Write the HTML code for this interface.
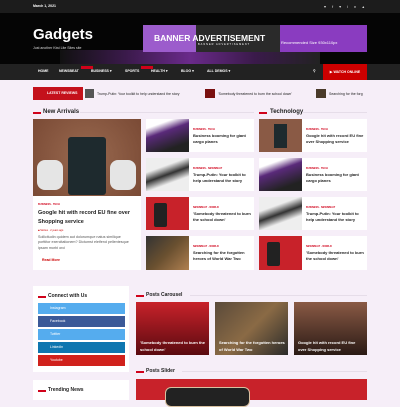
<!DOCTYPE html>
<html><head><meta charset="utf-8"><style>
*{margin:0;padding:0;box-sizing:border-box}
body{width:400px;height:400px;overflow:hidden;background:#f6eef8;font-family:"Liberation Sans",sans-serif;position:relative}
.a{position:absolute}
.t{font-size:4px;color:#222;font-weight:bold;line-height:6px}
.cat{font-size:2.5px;color:#d0021b;font-weight:bold}
.card{background:#fff}
.h{font-size:6px;font-weight:bold;color:#222}
.bar{width:8px;height:1.5px;background:#d0021b}
.line{height:1px;background:#e6dde9}
.nav span{position:absolute;top:5px;font-size:3.5px;color:#fff;font-weight:bold}
.soc{position:absolute;left:38px;width:87px;height:11px;color:#fff;font-size:3.5px;line-height:11px;padding-left:12px}
</style></head><body>
<div class="a" style="left:0;top:0;width:400px;height:13px;background:#1c1c1c"></div>
<div class="a" style="left:33px;top:4px;font-size:3.5px;color:#fff;font-weight:bold">March 1, 2021</div>
<div class="a" style="left:324px;top:4px;font-size:4px;color:#ddd;letter-spacing:6px">▾f▾in▴</div>
<div class="a" style="left:0;top:13px;width:400px;height:51px;background:#050505"></div>
<div class="a" style="left:60px;top:50px;width:260px;height:14px;background:linear-gradient(90deg,#111,#3a1a4a,#6a2a8a,#3a1a4a,#222)"></div>
<div class="a" style="left:33px;top:26px;font-size:15px;color:#fff;font-weight:bold">Gadgets</div>
<div class="a" style="left:33px;top:46px;font-size:3.5px;color:#ddd">Just another Kiwi Lite Sites site</div>
<div class="a" style="left:143px;top:25px;width:53px;height:27px;background:#9c5ccc"></div>
<div class="a" style="left:196px;top:25px;width:84px;height:27px;background:#2a2a2a"></div>
<div class="a" style="left:280px;top:25px;width:87px;height:27px;background:#8a3cc0"></div>
<div class="a" style="left:154px;top:33px;font-size:8.5px;color:#fff;font-weight:bold;white-space:nowrap">BANNER ADVERTISEMENT</div>
<div class="a" style="left:198px;top:43px;font-size:2.5px;color:#fff;letter-spacing:1px">BANNER ADVERTISEMENT</div>
<div class="a" style="left:281px;top:40px;font-size:4px;color:#fff">Recommended Size 930x110px</div>
<div class="a nav" style="left:0;top:64px;width:400px;height:16px;background:#222">
<span style="left:38px">HOME</span><span style="left:59px">NEWSBEAT</span><span style="left:91px">BUSINESS ▾</span><span style="left:125px">SPORTS</span><span style="left:151px">HEALTH ▾</span><span style="left:181px">BLOG ▾</span><span style="left:207px">ALL DEMOS ▾</span><span style="left:313px">⚲</span>
</div>
<div class="a" style="left:81px;top:66px;width:12px;height:3px;background:#d0021b"></div>
<div class="a" style="left:141px;top:66px;width:12px;height:3px;background:#d0021b"></div>
<div class="a" style="left:323px;top:64px;width:44px;height:16px;background:#c00;color:#fff;font-size:3.5px;font-weight:bold;line-height:16px;text-align:center">▶ WATCH ONLINE</div>
<div class="a" style="left:33px;top:87px;width:50px;height:13px;background:#c4111b;color:#fff;font-size:3.5px;font-weight:bold;line-height:13px;padding-left:14px">LATEST REVIEWS</div>
<div class="a" style="left:85px;top:89px;width:9px;height:9px;background:#555"></div>
<div class="a" style="left:97px;top:92px;font-size:3.5px;color:#222">Trump-Putin: Your toolkit to help understand the story</div>
<div class="a" style="left:205px;top:89px;width:10px;height:9px;background:#7a1010"></div>
<div class="a" style="left:218px;top:92px;font-size:3.5px;color:#222">'Somebody threatened to burn the school down'</div>
<div class="a" style="left:316px;top:89px;width:10px;height:9px;background:#4a3a2a"></div>
<div class="a" style="left:329px;top:92px;font-size:3.5px;color:#222">Searching for the forg</div>
<!-- New arrivals -->
<div class="a bar" style="left:33px;top:112px"></div>
<div class="a h" style="left:43px;top:109px">New Arrivals</div>
<div class="a line" style="left:80px;top:112px;width:174px"></div>
<div class="a bar" style="left:259px;top:112px"></div>
<div class="a h" style="left:270px;top:109px">Technology</div>
<div class="a line" style="left:302px;top:112px;width:65px"></div>
<div class="a" style="left:33px;top:119px;width:108px;height:77px;background:radial-gradient(circle at 50% 50%,#9a6a50,#7a4a35)"></div>
<div class="a" style="left:68px;top:137px;width:38px;height:58px;background:#1e2a2e;border-radius:3px"></div>
<div class="a" style="left:37px;top:160px;width:26px;height:30px;border-radius:8px;background:#e5e5e5"></div>
<div class="a" style="left:110px;top:160px;width:26px;height:30px;border-radius:8px;background:#e5e5e5"></div>
<div class="a card" style="left:33px;top:196px;width:108px;height:74px"></div>
<div class="a cat" style="left:38px;top:203px">BUSINESS · TECH</div>
<div class="a" style="left:38px;top:209px;width:96px;font-size:5.5px;font-weight:bold;color:#222;line-height:8.5px">Google hit with record EU fine over Shopping service</div>
<div class="a" style="left:38px;top:229px;font-size:2.5px;color:#c00">■ Stories · 2 years ago</div>
<div class="a" style="left:38px;top:235px;width:96px;font-size:3.7px;color:#555;line-height:5.3px">Sollicitudin quidem aut dolorumque natus similique porttitor exercitationem? Dictumst eleifend pellentesque ipsam morbi orci</div>
<div class="a" style="left:42px;top:258px;font-size:3.5px;font-weight:bold;color:#c00">Read More</div>
<!-- middle/right lists -->
<div class="a card" style="left:146px;top:119px;width:108px;height:33px"></div><div class="a" style="left:146px;top:119px;width:43px;height:33px;background:linear-gradient(160deg,#fff 20%,#5a2a7a 40%,#222 80%)"></div><div class="a cat" style="left:193px;top:128px">BUSINESS · TECH</div><div class="a t" style="left:193px;top:133px;width:58px">Business booming for giant cargo planes</div>
<div class="a card" style="left:146px;top:158px;width:108px;height:33px"></div><div class="a" style="left:146px;top:158px;width:43px;height:33px;background:linear-gradient(160deg,#eee 30%,#333 50%,#eee 70%)"></div><div class="a cat" style="left:193px;top:167px">BUSINESS · NEWSBEAT</div><div class="a t" style="left:193px;top:172px;width:58px">Trump-Putin: Your toolkit to help understand the story</div>
<div class="a card" style="left:146px;top:197px;width:108px;height:33px"></div><div class="a" style="left:146px;top:197px;width:43px;height:33px;background:#c8222a"></div><div class="a" style="left:154px;top:203px;width:13px;height:24px;background:#222;border-radius:2px"></div><div class="a cat" style="left:193px;top:206px">NEWSBEAT · WORLD</div><div class="a t" style="left:193px;top:211px;width:58px">'Somebody threatened to burn the school down'</div>
<div class="a card" style="left:146px;top:236px;width:108px;height:34px"></div><div class="a" style="left:146px;top:236px;width:43px;height:34px;background:linear-gradient(135deg,#333,#6a5030,#b08050)"></div><div class="a cat" style="left:193px;top:245px">NEWSBEAT · WORLD</div><div class="a t" style="left:193px;top:250px;width:58px">Searching for the forgotten heroes of World War Two</div>
<div class="a card" style="left:259px;top:119px;width:108px;height:33px"></div><div class="a" style="left:259px;top:119px;width:43px;height:33px;background:#8a5a45"></div><div class="a" style="left:274px;top:124px;width:13px;height:24px;background:#1e2a2e"></div><div class="a cat" style="left:306px;top:128px">BUSINESS · TECH</div><div class="a t" style="left:306px;top:133px;width:58px">Google hit with record EU fine over Shopping service</div>
<div class="a card" style="left:259px;top:158px;width:108px;height:33px"></div><div class="a" style="left:259px;top:158px;width:43px;height:33px;background:linear-gradient(160deg,#fff 20%,#5a2a7a 40%,#222 80%)"></div><div class="a cat" style="left:306px;top:167px">BUSINESS · TECH</div><div class="a t" style="left:306px;top:172px;width:58px">Business booming for giant cargo planes</div>
<div class="a card" style="left:259px;top:197px;width:108px;height:33px"></div><div class="a" style="left:259px;top:197px;width:43px;height:33px;background:linear-gradient(160deg,#eee 30%,#333 50%,#eee 70%)"></div><div class="a cat" style="left:306px;top:206px">BUSINESS · NEWSBEAT</div><div class="a t" style="left:306px;top:211px;width:58px">Trump-Putin: Your toolkit to help understand the story</div>
<div class="a card" style="left:259px;top:236px;width:108px;height:34px"></div><div class="a" style="left:259px;top:236px;width:43px;height:34px;background:#c8222a"></div><div class="a" style="left:267px;top:242px;width:13px;height:24px;background:#222;border-radius:2px"></div><div class="a cat" style="left:306px;top:245px">NEWSBEAT · WORLD</div><div class="a t" style="left:306px;top:250px;width:58px">'Somebody threatened to burn the school down'</div>
<!-- sidebar -->
<div class="a card" style="left:33px;top:286px;width:96px;height:86px"></div>
<div class="a bar" style="left:38px;top:296px"></div>
<div class="a h" style="left:48px;top:293px;font-size:5px">Connect with Us</div>
<div class="soc" style="top:303px;background:#55acee">Instagram</div>
<div class="soc" style="top:316px;background:#3b5998">Facebook</div>
<div class="soc" style="top:329px;background:#55acee">Twitter</div>
<div class="soc" style="top:342px;background:#0e76b0">Linkedin</div>
<div class="soc" style="top:355px;background:#d0211c">Youtube</div>
<div class="a card" style="left:33px;top:380px;width:96px;height:20px"></div>
<div class="a bar" style="left:38px;top:390px"></div>
<div class="a h" style="left:48px;top:387px;font-size:5px">Trending News</div>
<!-- carousel -->
<div class="a bar" style="left:136px;top:295px"></div>
<div class="a h" style="left:146px;top:292px;font-size:5px">Posts Carousel</div>
<div class="a line" style="left:190px;top:295px;width:177px"></div>
<div class="a" style="left:136px;top:302px;width:73px;height:53px;background:linear-gradient(#c8222a,#5a0a10)"></div>
<div class="a" style="left:215px;top:302px;width:73px;height:53px;background:linear-gradient(135deg,#5a4a3a,#8a6a45,#2a2a2a)"></div>
<div class="a" style="left:294px;top:302px;width:73px;height:53px;background:linear-gradient(#8a5a45,#2a1a15)"></div>
<div class="a" style="left:140px;top:340px;width:66px;font-size:4px;color:#fff;font-weight:bold;line-height:6.5px">'Somebody threatened to burn the school down'</div>
<div class="a" style="left:219px;top:340px;width:66px;font-size:4px;color:#fff;font-weight:bold;line-height:6.5px">Searching for the forgotten heroes of World War Two</div>
<div class="a" style="left:298px;top:340px;width:66px;font-size:4px;color:#fff;font-weight:bold;line-height:6.5px">Google hit with record EU fine over Shopping service</div>
<div class="a bar" style="left:136px;top:371px"></div>
<div class="a h" style="left:146px;top:368px;font-size:5px">Posts Slider</div>
<div class="a line" style="left:182px;top:371px;width:185px"></div>
<div class="a" style="left:136px;top:379px;width:231px;height:21px;background:#c8222a"></div>
<div class="a" style="left:165px;top:387px;width:85px;height:20px;background:#222;border-radius:6px;border:1px solid #d8c0a0"></div>
</body></html>
